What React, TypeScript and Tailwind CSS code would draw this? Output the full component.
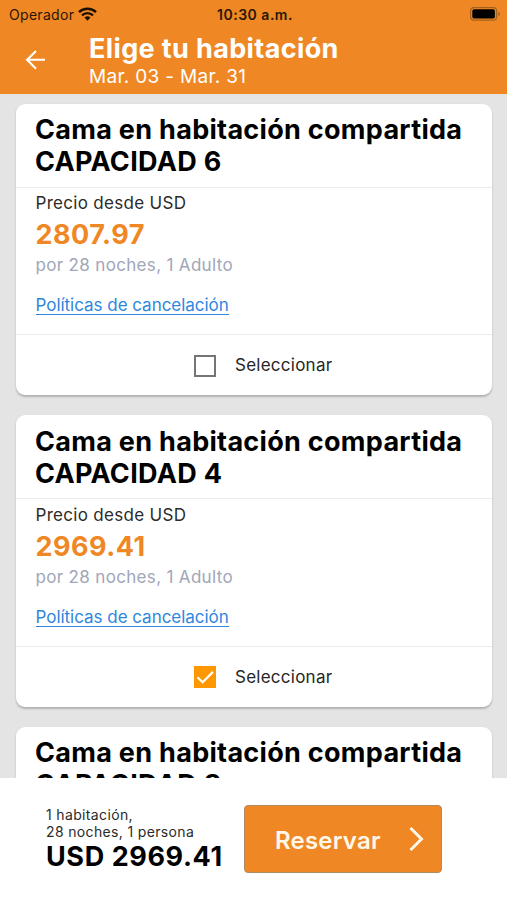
import { useState } from "react";

type Room = {
  id: number;
  name: string;
  capacity: number;
  price: string;
};

const ROOMS: Room[] = [
  { id: 1, name: "Cama en habitación compartida", capacity: 6, price: "2807.97" },
  { id: 2, name: "Cama en habitación compartida", capacity: 4, price: "2969.41" },
  { id: 3, name: "Cama en habitación compartida", capacity: 8, price: "3130.85" },
];

function WifiIcon() {
  return (
    <svg width="19" height="14" viewBox="0 0 19 14" fill="none" stroke="#1c0f02">
      <path d="M1 5.2a12.3 12.3 0 0 1 17 0" strokeWidth="2.4" />
      <path d="M4 8.3a8 8 0 0 1 11 0" strokeWidth="2.3" />
      <path d="M9.5 13.7 6.5 10.6a4.4 4.4 0 0 1 6 0Z" fill="#1c0f02" stroke="none" />
    </svg>
  );
}

function BatteryIcon() {
  return (
    <svg width="31" height="14" viewBox="0 0 31 14">
      <rect x="0.6" y="0.6" width="26" height="12.6" rx="3.4" fill="none" stroke="#a3601f" strokeWidth="1.2" />
      <rect x="2.3" y="2.2" width="22.6" height="9.4" rx="1.8" fill="#000" />
      <path d="M28.2 4.7c2.3.8 2.3 3.6 0 4.4z" fill="#a3601f" />
    </svg>
  );
}

function StatusBar() {
  return (
    <div className="flex h-7 items-center pl-[9px] pr-[6px] text-[14px] text-[#2a1604]">
      <div className="flex flex-1 items-center gap-[4px]">
        <span className="tracking-[0.3px]">Operador</span>
        <WifiIcon />
      </div>
      <span className="font-semibold tracking-[0.5px]">10:30 a.m.</span>
      <div className="flex flex-1 justify-end">
        <BatteryIcon />
      </div>
    </div>
  );
}

function Header() {
  return (
    <header className="h-[94px] shrink-0 bg-[#ef8824]">
      <StatusBar />
      <div className="flex text-white">
        <button type="button" aria-label="Volver" className="ml-[25px] mt-[21px] h-[21px] w-[21px]">
          <svg width="21" height="21" viewBox="0 0 21 21" fill="none" stroke="currentColor" strokeWidth="2.1">
            <path d="M20 10.8H2.5M11 1.9 2.1 10.8l8.9 8.9" />
          </svg>
        </button>
        <div className="ml-[43px] whitespace-nowrap">
          <h1 className="mt-[5px] text-[27px] font-bold leading-8 tracking-[0.37px]">
            Elige tu habitación
          </h1>
          <p className="text-[19px] leading-[23px] tracking-[0.32px]">Mar. 03 - Mar. 31</p>
        </div>
      </div>
    </header>
  );
}

type CheckboxProps = {
  checked: boolean;
};

function Checkbox({ checked }: CheckboxProps) {
  if (!checked) {
    return <span className="h-[22px] w-[22px] border-2 border-[#757575]" />;
  }
  return (
    <span className="flex h-[22px] w-[22px] items-center justify-center bg-[#ff9800]">
      <svg width="22" height="22" viewBox="0 0 22 22" fill="none" stroke="#fff" strokeWidth="2.2">
        <path d="m3.4 11.2 5.2 5.1L19 5.9" />
      </svg>
    </span>
  );
}

type RoomCardProps = {
  room: Room;
  selected: boolean;
  onSelect: () => void;
};

function RoomCard({ room, selected, onSelect }: RoomCardProps) {
  return (
    <article className="h-[291.5px] shrink-0 overflow-hidden rounded-[9px] bg-white shadow-[0_1.5px_2px_rgba(0,0,0,0.22)]">
      <h2 className="h-[84px] whitespace-nowrap border-b border-[#ebebeb] pl-[19px] pt-[10.5px] text-[27px] font-bold leading-8 tracking-[0.3px] text-black">
        {room.name}
        <br />
        CAPACIDAD {room.capacity}
      </h2>
      <div className="h-[147.5px] border-b border-[#ebebeb] pl-[19.5px] pt-[3.5px]">
        <p className="text-[17px] leading-6 tracking-[0.3px] text-[#2b2b2b]">Precio desde USD</p>
        <p className="mt-1 text-[27px] font-bold leading-8 tracking-[0.5px] text-[#ef8824]">{room.price}</p>
        <p className="mt-[2px] text-[17px] leading-6 tracking-[0.33px] text-[#a0a6b8]">
          por 28 noches, 1 Adulto
        </p>
        <a
          href="#politicas"
          className="mt-[18px] inline-block h-5 border-b border-[#2f86dd] text-[17px] leading-[21px] tracking-[-0.03px] text-[#2f86dd]"
        >
          Políticas de cancelación
        </a>
      </div>
      <button
        type="button"
        role="checkbox"
        aria-checked={selected}
        onClick={onSelect}
        className="ml-[178px] flex h-[61px] items-center gap-[19px] text-[17px] tracking-[0.25px] text-[#262626]"
      >
        <Checkbox checked={selected} />
        <span className="pt-px">Seleccionar</span>
      </button>
    </article>
  );
}

function BookingBar({ total }: { total: string }) {
  return (
    <footer className="flex h-[122px] shrink-0 bg-white">
      <div className="ml-[46px] w-[198px] whitespace-nowrap pt-7 text-[14px] leading-[17px] tracking-[0.35px] text-[#2b2b2b]">
        <p>1 habitación,</p>
        <p>28 noches, 1 persona</p>
        <p className="mt-px text-[27px] font-bold leading-8 tracking-[0.6px] text-black">USD {total}</p>
      </div>
      <button
        type="button"
        className="mt-[27px] flex h-[68px] w-[198px] items-center justify-between rounded-[4px] border border-[#b08a60] bg-[#ef8824] pl-[30px] pr-[16px] text-[24px] font-semibold tracking-[0.2px] text-[#fff8ea]"
      >
        <span className="pt-[3px]">Reservar</span>
        <svg width="17" height="26" viewBox="0 0 17 26" fill="none" stroke="currentColor" strokeWidth="3">
          <path d="m2.5 2 11 11-11 11" />
        </svg>
      </button>
    </footer>
  );
}

export default function App() {
  const [selectedId, setSelectedId] = useState(2);
  const selected = ROOMS.find((r) => r.id === selectedId) ?? ROOMS[0];

  return (
    <div className="flex h-[900px] w-[507px] flex-col overflow-hidden bg-[#e4e4e4] font-[Inter,sans-serif]">
      <Header />
      <main className="flex min-h-0 flex-1 flex-col gap-5 overflow-hidden pl-4 pr-[15px] pt-[9.5px]">
        {ROOMS.map((room) => (
          <RoomCard
            key={room.id}
            room={room}
            selected={room.id === selectedId}
            onSelect={() => setSelectedId(room.id)}
          />
        ))}
      </main>
      <BookingBar total={selected.price} />
    </div>
  );
}
